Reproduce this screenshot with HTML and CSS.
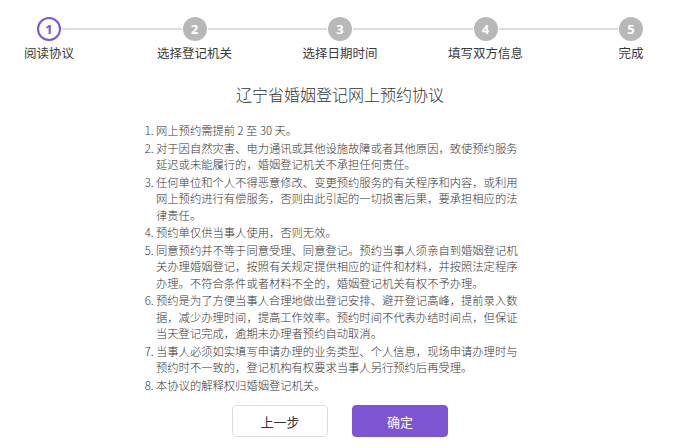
FILE: index.html
```html
<!DOCTYPE html>
<html lang="zh-CN">
<head>
<meta charset="utf-8">
<title>辽宁省婚姻登记网上预约协议</title>
<link rel="stylesheet" href="styles.css">
</head>
<body>
<div class="page">
  <div class="steps">
    <div class="step active"><span class="dot">1</span><span class="label">阅读协议</span></div>
    <div class="step"><span class="dot">2</span><span class="label">选择登记机关</span></div>
    <div class="step"><span class="dot">3</span><span class="label">选择日期时间</span></div>
    <div class="step"><span class="dot">4</span><span class="label">填写双方信息</span></div>
    <div class="step"><span class="dot">5</span><span class="label">完成</span></div>
  </div>

  <h1 class="title">辽宁省婚姻登记网上预约协议</h1>

  <ol class="terms">
    <li>网上预约需提前 2 至 30 天。</li>
    <li>对于因自然灾害、电力通讯或其他设施故障或者其他原因，致使预约服务延迟或未能履行的，婚姻登记机关不承担任何责任。</li>
    <li>任何单位和个人不得恶意修改、变更预约服务的有关程序和内容，或利用网上预约进行有偿服务，否则由此引起的一切损害后果，要承担相应的法律责任。</li>
    <li>预约单仅供当事人使用，否则无效。</li>
    <li>同意预约并不等于同意受理、同意登记。预约当事人须亲自到婚姻登记机关办理婚姻登记，按照有关规定提供相应的证件和材料，并按照法定程序办理。不符合条件或者材料不全的，婚姻登记机关有权不予办理。</li>
    <li>预约是为了方便当事人合理地做出登记安排、避开登记高峰，提前录入数据，减少办理时间，提高工作效率。预约时间不代表办结时间点，但保证当天登记完成，逾期未办理者预约自动取消。</li>
    <li>当事人必须如实填写申请办理的业务类型、个人信息，现场申请办理时与预约时不一致的，登记机构有权要求当事人另行预约后再受理。</li>
    <li>本协议的解释权归婚姻登记机关。</li>
  </ol>

  <div class="actions">
    <button class="btn btn-default" type="button">上一步</button>
    <button class="btn btn-primary" type="button">确定</button>
  </div>
</div>
</body>
</html>
```

FILE: styles.css
```css
html, body {
  margin: 0;
  padding: 0;
  background: #fff;
  overflow: hidden;
}

body {
  font-family: "Noto Sans CJK SC", "Noto Sans", sans-serif;
  color: #333;
}

.page {
  width: 680px;
  padding-top: 17px;
}

.steps {
  display: flex;
  justify-content: space-between;
}

.step {
  position: relative;
  width: 98px;
  display: flex;
  flex-direction: column;
  align-items: center;
}

.step + .step::before {
  content: "";
  position: absolute;
  top: 11px;
  right: calc(50% + 13px);
  width: 119.5px;
  height: 2px;
  background: #dcdcdc;
}

.dot {
  box-sizing: border-box;
  width: 24px;
  height: 24px;
  border-radius: 50%;
  background: #b8b8b8;
  color: #fff;
  font-size: 13px;
  font-weight: 700;
  line-height: 24px;
  text-align: center;
  font-family: "Open Sans", "Noto Sans", sans-serif;
}

.step.active .dot {
  background: #fff;
  border: 2px solid #7b55d3;
  color: #7b55d3;
  line-height: 20px;
}

.label {
  margin-top: 3px;
  font-size: 12.5px;
  line-height: 17px;
  color: #3a3a3a;
  white-space: nowrap;
}

.title {
  margin: 20.5px 0 0;
  font-size: 16px;
  line-height: 24px;
  font-weight: 300;
  text-align: center;
  color: #333;
}

.terms {
  width: 368px;
  margin: 16.5px auto 0;
  padding: 0;
  font-size: 11.3px;
  line-height: 16.5px;
  font-weight: 300;
  color: #333;
}

.terms li {
  margin-bottom: 1px;
}

.actions {
  display: flex;
  justify-content: center;
  gap: 24px;
  margin-top: 12px;
}

.btn {
  box-sizing: border-box;
  width: 96px;
  height: 32px;
  border-radius: 4px;
  font-family: "Noto Sans CJK SC", sans-serif;
  font-size: 13px;
  cursor: pointer;
}

.btn-default {
  background: #fff;
  border: 1px solid #dcdcdc;
  color: #333;
}

.btn-primary {
  background: #7b55d3;
  border: 1px solid #7b55d3;
  color: #fff;
}
```
